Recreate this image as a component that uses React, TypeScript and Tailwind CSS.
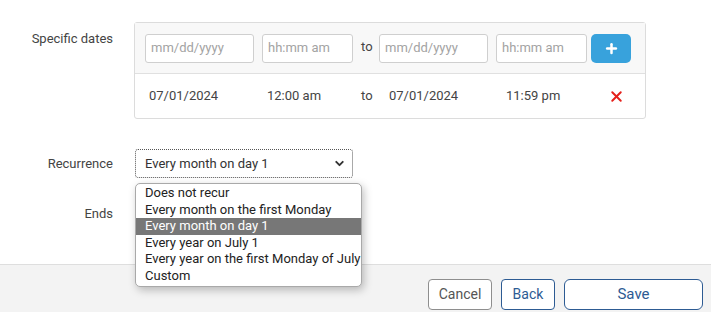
import { Plus, X, ChevronDown } from "lucide-react";

const options = [
  "Does not recur",
  "Every month on the first Monday",
  "Every month on day 1",
  "Every year on July 1",
  "Every year on the first Monday of July",
  "Custom",
];

function Field({ placeholder, width }: { placeholder: string; width: string }) {
  return (
    <div
      className={`${width} h-[29px] rounded-[3px] border border-[#cfcfcf] bg-white px-[5px] flex items-center text-[13px] text-[#a3a3a3]`}
    >
      {placeholder}
    </div>
  );
}

export default function App() {
  return (
    <div
      className="relative w-[711px] h-[312px] bg-white overflow-hidden text-[13px] text-[#444]"
      style={{ fontFamily: "Roboto, 'Liberation Sans', sans-serif" }}
    >
      <div className="h-[264px] pt-[22px]">
        {/* Specific dates */}
        <div className="flex">
          <div className="w-[114px] pr-px pt-[7px] text-right">Specific dates</div>
          <div className="ml-[20px] w-[512px] rounded-[3px] border border-[#dcdcdc]">
            <div className="h-[51px] bg-[#f8f8f8] border-b border-[#e0e0e0] pl-[10px] flex items-center">
              <Field placeholder="mm/dd/yyyy" width="w-[109px]" />
              <div className="ml-[8px]">
                <Field placeholder="hh:mm am" width="w-[91px]" />
              </div>
              <span className="ml-[8px] w-[18px] pb-[3px]">to</span>
              <Field placeholder="mm/dd/yyyy" width="w-[109px]" />
              <div className="ml-[8px]">
                <Field placeholder="hh:mm am" width="w-[91px]" />
              </div>
              <button className="ml-[4px] w-[40px] h-[29px] rounded-[5px] bg-[#38a2dc] flex items-center justify-center">
                <Plus size={15} strokeWidth={4} className="text-white" />
              </button>
            </div>
            <div className="h-[44px] flex items-center text-[#444]">
              <span className="ml-[14px] w-[118px]">07/01/2024</span>
              <span className="w-[94px]">12:00 am</span>
              <span className="w-[28px]">to</span>
              <span className="w-[117px]">07/01/2024</span>
              <span className="w-[102px]">11:59 pm</span>
              <X size={17} strokeWidth={2.75} className="text-[#e5201b]" />
            </div>
          </div>
        </div>

        {/* Recurrence */}
        <div className="flex items-center mt-[30px]">
          <div className="w-[114px] pr-px text-right">Recurrence</div>
          <div className="ml-[21px] w-[218px] h-[29px] rounded-[3px] border border-dotted border-[#555] pl-[9px] pr-[6px] flex items-center justify-between text-[#333]">
            <span>Every month on day 1</span>
            <ChevronDown size={13} strokeWidth={3.5} className="text-[#333]" />
          </div>
        </div>

        {/* Ends */}
        <div className="flex mt-[26px]">
          <div className="w-[114px] pr-px text-right">Ends</div>
        </div>
      </div>

      {/* Footer */}
      <div className="h-[48px] bg-[#f3f3f3] border-t border-[#dedede] flex items-start justify-end gap-[9px] pt-[14px] pr-[8px]">
        <button className="w-[64px] h-[31px] rounded-[4px] border border-[#8e8e8e] bg-white text-[14px] text-[#555]">
          Cancel
        </button>
        <button className="w-[54px] h-[31px] rounded-[4px] border border-[#2d5b93] bg-white text-[14px] text-[#2d5b93]">
          Back
        </button>
        <button className="w-[139px] h-[31px] rounded-[6px] border border-[#2d5b93] bg-white text-[15px] text-[#2d5b93]">
          Save
        </button>
      </div>

      {/* Open select list */}
      <div className="absolute left-[135px] top-[183px] w-[227px] rounded-[5px] border border-[#a9a9a9] bg-white py-px shadow-[2px_3px_8px_rgba(0,0,0,0.25)] text-[13px] text-[#222]">
        {options.map((o) => (
          <div
            key={o}
            className={`h-[16.6px] leading-[16px] pl-[9px] whitespace-nowrap ${
              o === "Every month on day 1" ? "bg-[#777] text-white" : ""
            }`}
          >
            {o}
          </div>
        ))}
      </div>
    </div>
  );
}
